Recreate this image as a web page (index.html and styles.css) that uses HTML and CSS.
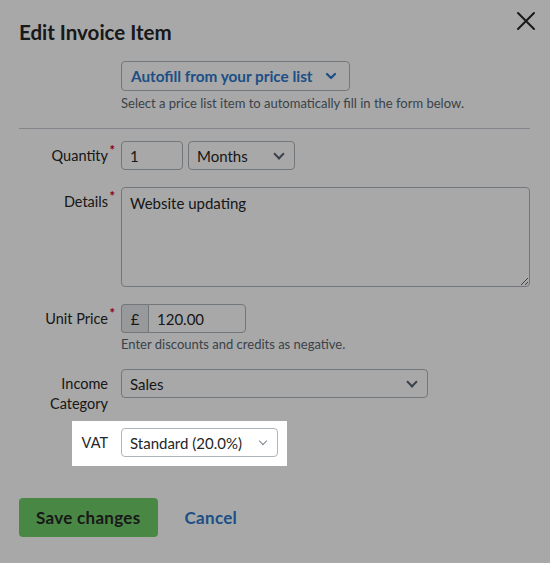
FILE: index.html
```html
<!DOCTYPE html>
<html lang="en">
<head>
    <meta charset="UTF-8">
    <title>Edit Invoice Item</title>
    <link rel="stylesheet" href="styles.css">
</head>
<body>
    <div class="modal">
        <div class="modal-header">
            <h1 class="modal-title">Edit Invoice Item</h1>
            <button class="close-btn" aria-label="Close">
                <svg width="20" height="20" viewBox="0 0 20 20"><path d="M2 2 L18 18 M18 2 L2 18" stroke="#262626" stroke-width="2" stroke-linecap="round"/></svg>
            </button>
        </div>

        <div class="autofill">
            <button class="autofill-btn">Autofill from your price list
                <svg width="12" height="8" viewBox="0 0 12 8"><path d="M2 2 L6 6 L10 2" fill="none" stroke="#2c78cb" stroke-width="2.2" stroke-linecap="round" stroke-linejoin="round"/></svg>
            </button>
            <div class="help">Select a price list item to automatically fill in the form below.</div>
        </div>

        <hr class="divider">

        <div class="form-row">
            <label class="label required">Quantity</label>
            <div class="field inline">
                <input class="input qty" type="text" value="1">
                <div class="select months">Months <span class="chev"></span></div>
            </div>
        </div>

        <div class="form-row">
            <label class="label required">Details</label>
            <div class="field">
                <textarea class="textarea">Website updating</textarea>
            </div>
        </div>

        <div class="form-row">
            <label class="label required">Unit Price</label>
            <div class="field">
                <div class="input-group">
                    <span class="addon">£</span>
                    <input class="input price" type="text" value="120.00">
                </div>
                <div class="help">Enter discounts and credits as negative.</div>
            </div>
        </div>

        <div class="form-row">
            <label class="label">Income<br>Category</label>
            <div class="field">
                <div class="select category">Sales <span class="chev"></span></div>
            </div>
        </div>

        <div class="form-row spotlight">
            <label class="label">VAT</label>
            <div class="field">
                <div class="select vat">Standard (20.0%) <span class="chev light"></span></div>
            </div>
        </div>

        <div class="actions">
            <button class="btn-save">Save changes</button>
            <a class="cancel" href="#">Cancel</a>
        </div>
    </div>
    <div class="overlay"></div>
</body>
</html>
```

FILE: styles.css
```css
body {
    margin: 0;
    background: #ffffff;
    font-family: Lato, "Noto Sans", sans-serif;
    color: #262626;
}
.overlay {
    position: fixed;
    top: 0;
    left: 0;
    right: 0;
    bottom: 0;
    background: rgba(0, 0, 0, 0.34);
    z-index: 1;
}
.modal {
    padding: 0 20px 0 19px;
}
.modal-header {
    display: flex;
    justify-content: space-between;
    align-items: flex-start;
}
.modal-title {
    font-size: 20.5px;
    font-weight: 700;
    margin: 20px 0 0 0;
    line-height: 24px;
}
.close-btn {
    background: none;
    border: none;
    padding: 0;
    margin: 11px -6px 0 0;
    cursor: pointer;
}
.autofill {
    margin: 17px 0 0 102px;
}
.autofill-btn {
    display: inline-flex;
    align-items: center;
    gap: 12px;
    height: 30px;
    padding: 0 12px 0 9px;
    border: 1px solid #aeb5bc;
    border-radius: 4px;
    background: #ffffff;
    color: #2c78cb;
    font-family: inherit;
    font-size: 15.3px;
    font-weight: 700;
}
.help {
    font-size: 13px;
    color: #5a6570;
    margin-top: 3px;
}
.autofill .help {
    margin-top: 4px;
}
.divider {
    border: none;
    border-top: 1px solid #c6ccd2;
    margin: 17px 0 12px 0;
}
.form-row {
    display: flex;
    align-items: flex-start;
    margin-bottom: 17px;
}
.label {
    width: 89px;
    flex-shrink: 0;
    text-align: right;
    font-size: 14.5px;
    line-height: 20px;
    padding-top: 5px;
    margin-right: 13px;
    position: relative;
}
.required::after {
    content: "*";
    color: #d00000;
    font-weight: 700;
    font-size: 13px;
    position: absolute;
    right: -7px;
    top: -1px;
}
.field {
    flex: 1;
}
.field.inline {
    display: flex;
    gap: 5px;
}
.input, .select, .textarea {
    box-sizing: border-box;
    height: 29px;
    border: 1px solid #aeb5bc;
    border-radius: 4px;
    font-family: inherit;
    font-size: 15px;
    color: #262626;
    padding: 0 8px;
    background: #ffffff;
}
.qty {
    width: 62px;
}
.select {
    display: flex;
    align-items: center;
    justify-content: space-between;
}
.months {
    width: 107px;
}
.chev {
    width: 6px;
    height: 6px;
    border-right: 2px solid #5a6570;
    border-bottom: 2px solid #5a6570;
    transform: rotate(45deg);
    margin: -4px 3px 0 0;
}
.chev.light {
    border-color: #7a848d;
    width: 5px;
    height: 5px;
    border-width: 1.5px;
}
.textarea {
    display: block;
    width: 409px;
    height: 100px;
    padding: 6px 8px;
    resize: vertical;
}
.input-group {
    display: flex;
    width: 125px;
}
.addon {
    box-sizing: border-box;
    width: 27px;
    height: 29px;
    border: 1px solid #aeb5bc;
    border-right: none;
    border-radius: 4px 0 0 4px;
    background: #e7e9ec;
    font-size: 15px;
    display: flex;
    align-items: center;
    justify-content: center;
}
.price {
    width: 98px;
    border-radius: 0 4px 4px 0;
}
.category {
    width: 307px;
}
.spotlight {
    position: relative;
    z-index: 2;
    background: #ffffff;
    width: 215px;
    margin-left: 53px;
    padding: 7px 10px 9px 0;
    box-sizing: border-box;
    margin-top: -10px;
    margin-bottom: 0;
}
.spotlight .label {
    width: 36px;
}
.vat {
    width: 157px;
}
.actions {
    display: flex;
    align-items: center;
    gap: 27px;
    margin-top: 32px;
}
.btn-save {
    height: 39px;
    padding: 0 17px;
    background: #6fcf68;
    border: none;
    border-radius: 4px;
    font-family: inherit;
    font-size: 17px;
    letter-spacing: 0.3px;
    font-weight: 700;
    color: #262626;
}
.cancel {
    color: #2c78cb;
    font-size: 17px;
    letter-spacing: 0.3px;
    font-weight: 700;
    text-decoration: none;
}
```
